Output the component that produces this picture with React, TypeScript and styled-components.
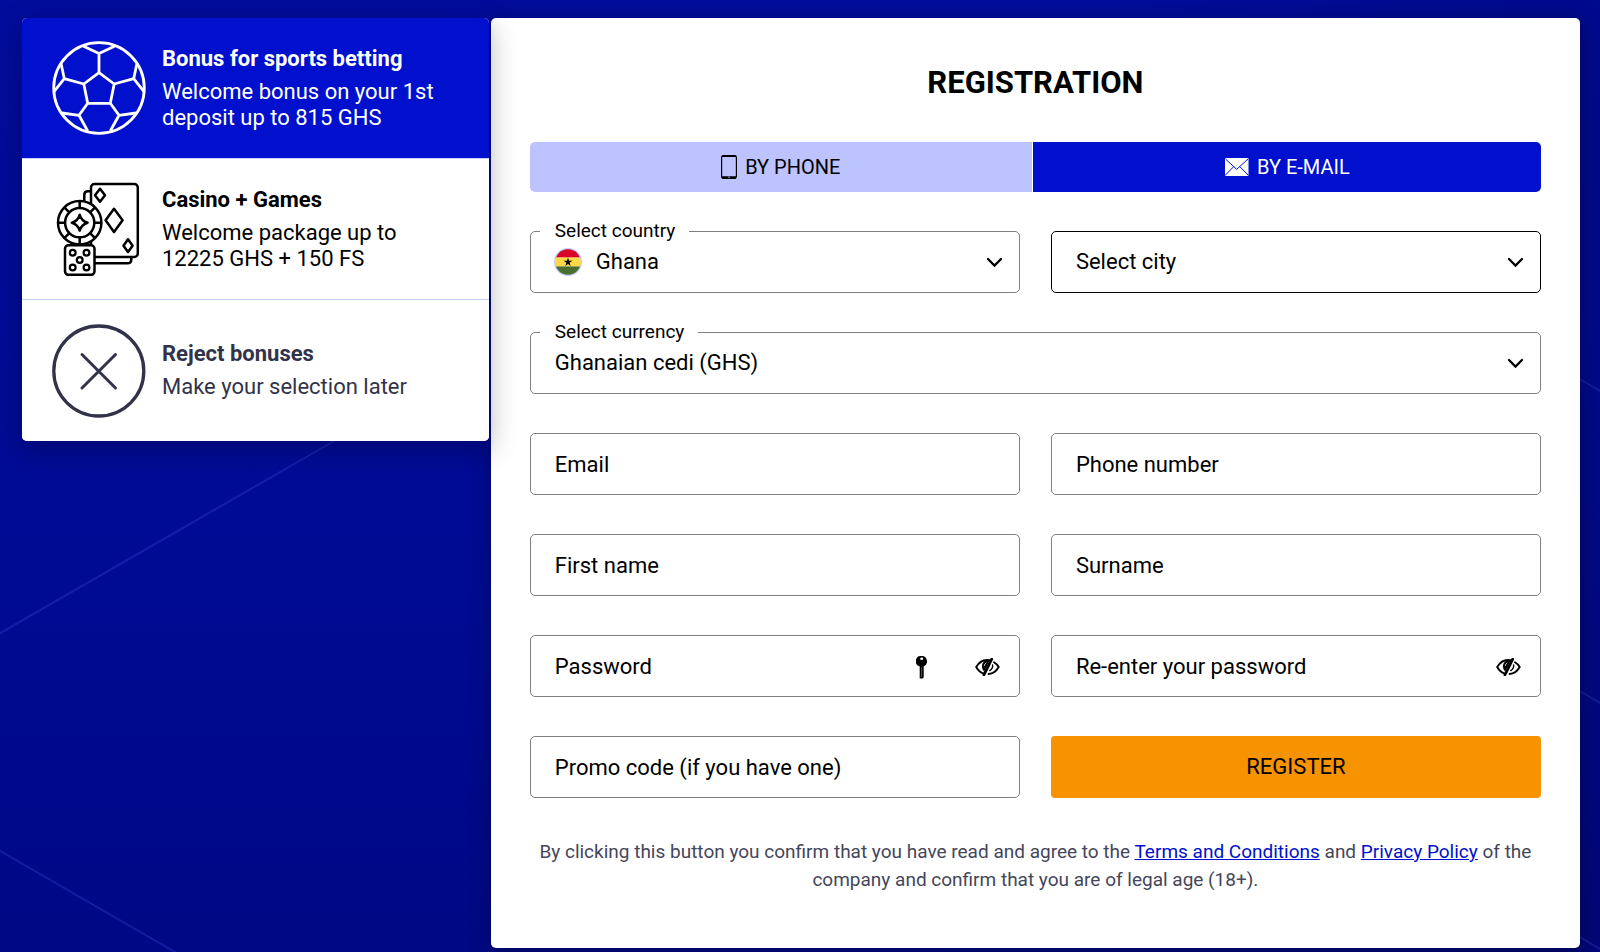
import React, { useState } from "react";
import styled, { createGlobalStyle, css } from "styled-components";

const GlobalStyle = createGlobalStyle`
  *, *::before, *::after { box-sizing: border-box; }
  html { background: #00088a; }
  body {
    margin: 0;
    font-family: Roboto, "Liberation Sans", sans-serif;
    font-size: 22px;
    line-height: 26px;
    color: #000;
  }
  button, input, select { font: inherit; color: inherit; }
`;

const Page = styled.div`
  position: relative;
  min-height: 100vh;
  padding: 18px 20px 4px 22px;
  background: linear-gradient(100deg, rgba(0, 0, 60, 0) 60%, rgba(0, 0, 60, 0.2) 100%),
    linear-gradient(180deg, #000c9c 0%, #000b94 60%, #000885 100%);
`;

const Backdrop = styled.svg`
  position: absolute;
  inset: 0;
  width: 100%;
  height: 100%;
  pointer-events: none;
`;

const Layout = styled.div`
  position: relative;
  display: grid;
  grid-template-columns: minmax(0, 3fr) minmax(0, 7fr);
  column-gap: 2px;
  align-items: start;
`;

const BonusList = styled.aside`
  position: relative;
  z-index: 1;
  display: flex;
  flex-direction: column;
  overflow: hidden;
  border-radius: 5px;
  background: #fff;
  box-shadow: 0 8px 28px rgba(0, 0, 20, 0.3);
`;

const BonusOption = styled.button<{ $tone: "active" | "normal" | "muted" }>`
  display: flex;
  align-items: center;
  gap: 16px;
  min-height: 141px;
  padding: 0 30px;
  border: 0;
  border-bottom: 1px solid #c9d0ff;
  text-align: left;
  cursor: pointer;
  background: ${(p) => (p.$tone === "active" ? "#0010cc" : "#fff")};
  color: ${(p) => ({ active: "#fff", normal: "#000", muted: "#32334a" })[p.$tone]};

  &:last-child { border-bottom: 0; }
`;

const BonusIcon = styled.svg`
  flex: none;
  width: 94px;
  height: 94px;
`;

const BonusText = styled.span`
  display: flex;
  flex-direction: column;
  gap: 7px;
`;

const BonusTitle = styled.strong`
  font-weight: 700;
`;

const Panel = styled.main`
  padding: 47px 39px 54px;
  border-radius: 5px;
  background: #fff;
  box-shadow: 0 4px 22px rgba(0, 0, 20, 0.4);
`;

const Heading = styled.h1`
  margin: 0 0 41px;
  font-size: 31px;
  line-height: 36px;
  font-weight: 700;
  text-align: center;
`;

const Tabs = styled.div`
  display: flex;
  gap: 1px;
  margin-bottom: 39px;
  overflow: hidden;
  border-radius: 5px;
`;

const Tab = styled.button<{ $active: boolean }>`
  flex: 1 1 auto;
  display: flex;
  align-items: center;
  justify-content: center;
  gap: 8px;
  height: 50px;
  padding: 0;
  border: 0;
  font-size: 20px;
  text-transform: uppercase;
  cursor: pointer;
  background: ${(p) => (p.$active ? "#0010cc" : "#bcc3ff")};
  color: ${(p) => (p.$active ? "#fff" : "#000")};
`;

const Form = styled.form`
  display: grid;
  grid-template-columns: repeat(2, minmax(0, 1fr));
  gap: 39px 31px;
`;

const Field = styled.div<{ $wide?: boolean }>`
  position: relative;
  ${(p) => p.$wide && "grid-column: 1 / -1;"}
`;

const raised = css`
  top: -13px;
  left: 10px;
  height: 26px;
  padding: 0 14px 0 15px;
  font-size: 19px;
  background: #fff;
`;

const FieldLabel = styled.label<{ $raised?: boolean }>`
  position: absolute;
  top: 1px;
  left: 25px;
  height: 62px;
  display: flex;
  align-items: center;
  pointer-events: none;
  ${(p) => p.$raised && raised}
`;

const controlBox = css`
  display: block;
  width: 100%;
  height: 62px;
  padding: 0 24px;
  border: 1px solid #808080;
  border-radius: 5px;
  background: #fff;
  outline: none;
`;

const Input = styled.input`
  ${controlBox}
  &:focus + label,
  &:not(:placeholder-shown) + label {
    ${raised}
  }
`;

const Select = styled.select<{ $strong?: boolean; $flag?: boolean }>`
  ${controlBox}
  appearance: none;
  ${(p) => p.$strong && "border-color: #000;"}
  ${(p) => p.$flag && "padding-left: 65px;"}
`;

const Chevron = styled.svg`
  position: absolute;
  top: 26px;
  right: 17px;
  width: 17px;
  height: 11px;
  pointer-events: none;
`;

const Flag = styled.svg`
  position: absolute;
  top: 17px;
  left: 24px;
  width: 28px;
  height: 28px;
  pointer-events: none;
`;

const FieldTools = styled.div`
  position: absolute;
  top: 1px;
  right: 20px;
  height: 62px;
  display: flex;
  align-items: center;
  gap: 48px;
`;

const ToolButton = styled.button`
  display: flex;
  padding: 0;
  border: 0;
  background: none;
  cursor: pointer;
`;

const Submit = styled.button`
  height: 62px;
  border: 0;
  border-radius: 4px;
  background: #f79200;
  text-transform: uppercase;
  cursor: pointer;
`;

const Terms = styled.p`
  margin: 40px 0 0;
  font-size: 19px;
  line-height: 28px;
  text-align: center;
  color: #44465a;
`;

const TermsLink = styled.a`
  color: #0010cc;
  text-decoration: underline;
`;

const BallIcon = () => (
  <BonusIcon viewBox="0 0 94 94" fill="none" stroke="currentColor" strokeWidth="2.8" strokeLinejoin="round" aria-hidden="true">
    <circle cx="47" cy="47" r="45.3" />
    <path d="M47 31.7 62.2 43 58.3 62.3H35.7L31.8 43Z" />
    <path d="M47 31.7V12.5M31 5 47 12.5 63 5" />
    <path d="M62.2 43 81.7 37.7M85 22.3 81.7 37.7 91.8 50.3" />
    <path d="M31.8 43 12.3 37.7M9 22.3 12.3 37.7 2.2 50.3" />
    <path d="M58.3 62.3 67 74.3M84 72 67 74.3 58.3 90" />
    <path d="M35.7 62.3 27 74.3M10 72 27 74.3 35.7 90" />
  </BonusIcon>
);

const CasinoIcon = () => (
  <BonusIcon viewBox="0 0 94 94" fill="none" stroke="currentColor" strokeWidth="2.5" strokeLinejoin="round" aria-hidden="true">
    <path d="M39 9.3H36Q32.3 9.3 32.3 13V20M79.3 75V77.5Q79.3 81.3 75.5 81.3H42" />
    <rect x="39" y="2" width="46.8" height="73" rx="3.5" />
    <path d="M48 6.7 53 13.3 48 19.7 43 13.3Z" />
    <path d="M62 26.7 70.6 38.3 62 50 53.6 38.3Z" />
    <path d="M76 57.3 80.6 63.7 76 70 71.5 63.7Z" />
    <circle cx="27.7" cy="40.7" r="21.7" fill="#fff" />
    <circle cx="27.7" cy="40.7" r="14.6" />
    {[0, 45, 90, 135, 180, 225, 270, 315].map((a) => (
      <path key={a} d="M27.7 19V26" transform={`rotate(${a} 27.7 40.7)`} />
    ))}
    <path d="M27.7 32.8Q29.5 38.9 35.6 40.7Q29.5 42.5 27.7 48.6Q25.9 42.5 19.8 40.7Q25.9 38.9 27.7 32.8Z" />
    <rect x="13" y="63.3" width="29.5" height="29.5" rx="3.5" fill="#fff" />
    <g strokeWidth="2.2">
      <circle cx="20.7" cy="70.7" r="2.9" />
      <circle cx="34.5" cy="70.7" r="2.9" />
      <circle cx="27.7" cy="78" r="2.9" />
      <circle cx="20.7" cy="85.5" r="2.9" />
      <circle cx="34.5" cy="85.5" r="2.9" />
    </g>
  </BonusIcon>
);

const RejectIcon = () => (
  <BonusIcon viewBox="0 0 94 94" fill="none" stroke="currentColor" strokeWidth="3.3" strokeLinecap="round" aria-hidden="true">
    <circle cx="46.8" cy="47" r="45" />
    <path d="M30 30.5 63.5 64M63.5 30.5 30 64" strokeWidth="3" />
  </BonusIcon>
);

const PhoneIcon = () => (
  <svg width="16" height="24" viewBox="0 0 16 24" aria-hidden="true">
    <rect x="0.6" y="0.6" width="14.8" height="22.8" rx="1.8" fill="none" stroke="currentColor" strokeWidth="1.2" />
    <path d="M1 .7H15V2H1ZM1 21.3H15V23.4H1Z" fill="currentColor" />
    <circle cx="8" cy="22.3" r=".7" fill="#bcc3ff" />
  </svg>
);

const MailIcon = () => (
  <svg width="25" height="18" viewBox="0 0 25 18" aria-hidden="true">
    <rect x="1" width="23.5" height="18" rx="1.2" fill="currentColor" />
    <path d="M1.5 1 12.7 11.3 24 1M1.5 17 9.6 8.7M24 17 15.9 8.7" fill="none" stroke="#0010cc" strokeWidth="1" />
  </svg>
);

const ChevronIcon = () => (
  <Chevron viewBox="0 0 17 11" aria-hidden="true">
    <path d="M2 2 8.5 8.5 15 2" fill="none" stroke="#000" strokeWidth="2.3" strokeLinecap="round" />
  </Chevron>
);

const GhanaFlag = () => (
  <Flag viewBox="0 0 28 28" aria-hidden="true">
    <clipPath id="flag-round"><circle cx="14" cy="14" r="12.8" /></clipPath>
    <circle cx="14" cy="14" r="14" fill="#c5ccff" />
    <g clipPath="url(#flag-round)">
      <path d="M0 0H28V9.6H0Z" fill="#d80027" />
      <path d="M0 9.6H28V18.4H0Z" fill="#ffda44" />
      <path d="M0 18.4H28V28H0Z" fill="#496e2d" />
    </g>
    <path d="M14 9.6 15 12.8H18.3L15.6 14.7 16.7 18 14 16 11.3 18 12.4 14.7 9.7 12.8H13Z" fill="#000" />
  </Flag>
);

const KeyIcon = () => (
  <svg width="11" height="23" viewBox="0 0 11 23" aria-hidden="true">
    <path fillRule="evenodd" d="M5.5 0a5.3 5.3 0 0 1 2.2 10.2V21.5L6.5 22.6H3.7V10.4A5.3 5.3 0 0 1 5.5 0ZM5.7 1.6a1.4 1.1 0 1 0 .01 2.4 1.4 1.1 0 0 0 0-2.4Z" />
    <path d="M5.6 11.5V21" stroke="#777" strokeWidth=".7" />
  </svg>
);

const EyeIcon = () => (
  <svg width="25" height="18" viewBox="0 0 25 18" fill="none" stroke="#000" strokeWidth="1.9" strokeLinecap="round" aria-hidden="true">
    <path d="M14.5 2.3C8.5 1 4 4.4 1.2 9 2.9 12 5.2 14.3 8 15.3" />
    <path d="M14.8 1.7C11.5 1.6 7.8 3.3 7.1 7 6.6 10 7.8 12.2 9.3 13.6Z" fill="#000" stroke="none" />
    <path d="M9.3 7.6Q9.5 5.6 11 4.9" stroke="#fff" strokeWidth=".8" />
    <path d="M16.7 1.2 8.9 16.8" strokeWidth="2.8" />
    <path d="M19 4.3C21 5.5 22.6 7 23.7 9 21.4 13 18 15.7 13.6 16" />
    <path d="M17.6 7Q18.2 10.2 14.8 12.6" strokeWidth="1.4" />
  </svg>
);

type TextFieldProps = {
  id: string;
  label: string;
  type?: string;
  children?: React.ReactNode;
};

const TextField = ({ id, label, type = "text", children }: TextFieldProps) => (
  <Field>
    <Input id={id} type={type} placeholder=" " />
    <FieldLabel htmlFor={id}>{label}</FieldLabel>
    {children && <FieldTools>{children}</FieldTools>}
  </Field>
);

export default function App() {
  const [visible, setVisible] = useState(false);
  const toggle = () => setVisible(!visible);
  const passwordType = visible ? "text" : "password";

  return (
    <>
      <GlobalStyle />
      <Page>
        <Backdrop aria-hidden="true" stroke="#5a68ff" strokeOpacity="0.22" strokeWidth="2">
          <path d="M-10 639 400 403M-10 845 500 1140" />
          <svg x="100%" overflow="visible">
            <path d="M-60 356 20 402.500M-60 668 20 714.500M-60 914 20 960.500" />
          </svg>
        </Backdrop>
        <Layout>
          <BonusList>
            <BonusOption type="button" $tone="active">
              <BallIcon />
              <BonusText>
                <BonusTitle>Bonus for sports betting</BonusTitle>
                <span>Welcome bonus on your 1st deposit up to 815 GHS</span>
              </BonusText>
            </BonusOption>
            <BonusOption type="button" $tone="normal">
              <CasinoIcon />
              <BonusText>
                <BonusTitle>Casino + Games</BonusTitle>
                <span>Welcome package up to 12225 GHS + 150 FS</span>
              </BonusText>
            </BonusOption>
            <BonusOption type="button" $tone="muted">
              <RejectIcon />
              <BonusText>
                <BonusTitle>Reject bonuses</BonusTitle>
                <span>Make your selection later</span>
              </BonusText>
            </BonusOption>
          </BonusList>
          <Panel>
            <Heading>REGISTRATION</Heading>
            <Tabs>
              <Tab type="button" $active={false}><PhoneIcon />By phone</Tab>
              <Tab type="button" $active><MailIcon />By e-mail</Tab>
            </Tabs>
            <Form onSubmit={(e) => e.preventDefault()}>
              <Field>
                <Select id="country" $flag><option>Ghana</option></Select>
                <FieldLabel htmlFor="country" $raised>Select country</FieldLabel>
                <GhanaFlag />
                <ChevronIcon />
              </Field>
              <Field>
                <Select id="city" $strong aria-label="City"><option>Select city</option></Select>
                <ChevronIcon />
              </Field>
              <Field $wide>
                <Select id="currency"><option>Ghanaian cedi (GHS)</option></Select>
                <FieldLabel htmlFor="currency" $raised>Select currency</FieldLabel>
                <ChevronIcon />
              </Field>
              <TextField id="email" label="Email" type="email" />
              <TextField id="phone" label="Phone number" type="tel" />
              <TextField id="first-name" label="First name" />
              <TextField id="surname" label="Surname" />
              <TextField id="password" label="Password" type={passwordType}>
                <ToolButton type="button" aria-label="Generate password"><KeyIcon /></ToolButton>
                <ToolButton type="button" aria-label="Show password" onClick={toggle}><EyeIcon /></ToolButton>
              </TextField>
              <TextField id="password-repeat" label="Re-enter your password" type={passwordType}>
                <ToolButton type="button" aria-label="Show password" onClick={toggle}><EyeIcon /></ToolButton>
              </TextField>
              <TextField id="promo" label="Promo code (if you have one)" />
              <Submit type="submit">Register</Submit>
            </Form>
            <Terms>
              By clicking this button you confirm that you have read and agree to the{" "}
              <TermsLink href="#terms">Terms and Conditions</TermsLink> and{" "}
              <TermsLink href="#privacy">Privacy Policy</TermsLink> of the company and confirm that you are of legal age (18+).
            </Terms>
          </Panel>
        </Layout>
      </Page>
    </>
  );
}
